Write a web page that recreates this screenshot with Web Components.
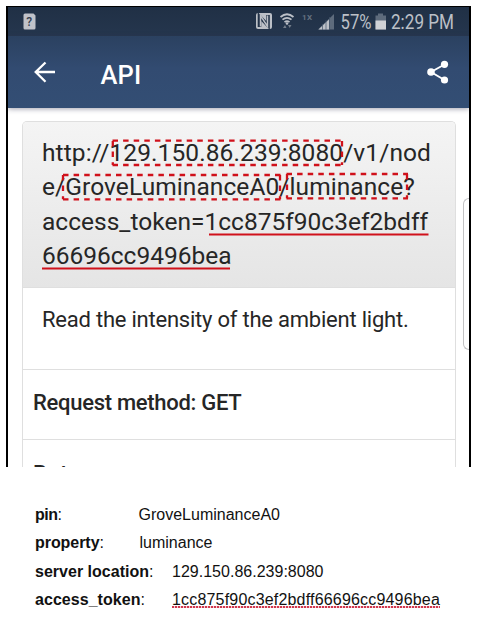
<!DOCTYPE html>
<html lang="en">
<head>
<meta charset="utf-8">
<title>API</title>
<style>
body { margin: 0; background: #fff; font-family: Roboto, sans-serif; color: #262626; }
</style>
</head>
<body>
<api-page></api-page>

<template id="t-page">
<style>
:host { display: block; width: 480px; height: 621px; overflow: hidden; }
</style>
<phone-shot></phone-shot>
<legend-list></legend-list>
</template>

<template id="t-phone">
<style>
:host { display: block; position: relative; box-sizing: border-box; width: 465px; height: 461px; margin: 6px 0 0 6px; overflow: hidden; border: solid #000; border-width: 1px 2px 0 2px; background: #fff; }
.edge { position: absolute; right: 0; top: 191px; width: 5px; height: 150px; border: 1px solid #c2c2c4; border-right: 0; border-radius: 7px 0 0 7px; }
</style>
<status-bar></status-bar>
<app-bar></app-bar>
<api-card></api-card>
<div class="edge"></div>
</template>

<template id="t-status">
<style>
:host { display: block; height: 29px; background: linear-gradient(#203045, #25364e); color: #bcc0c7; }
svg { display: block; }
text { font: 20px Roboto, sans-serif; fill: currentColor; }
</style>
<svg width="461" height="29" viewBox="8 7 461 29">
<path d="M25 13.5h8.5l2 2V28a1.5 1.5 0 0 1-1.500 1.500H25a1.500 1.500 0 0 1-1.500-1.500V15a1.500 1.500 0 0 1 1.500-1.500z" fill="#c0c2c9"/>
<text x="26.300" y="26" style="font-size:12px;font-weight:500;fill:#34404f">?</text>
<rect x="256" y="13" width="16" height="16" rx="2" fill="#bcc0c7"/>
<path d="M259.500 27V16.500L268 25.500V15" fill="none" stroke="#223248" stroke-width="3.600"/>
<path d="M260.500 26.500V15.500L267.500 26.500V15.500" fill="none" stroke="#bcc0c7" stroke-width="1.500"/>
<path d="M280.500 17q6.500-5.500 13 0M282.500 19.700q4.500-3.800 9 0M284.500 22.200q2.500-2 5 0" fill="none" stroke="#bcc0c7" stroke-width="1.700"/>
<circle cx="287" cy="23.500" r="1.300" fill="#bcc0c7"/>
<path d="M283 28l2-3 1.500 3zM288 25h3.500l-1.800 3z" fill="#747e8b"/>
<text x="302" y="20" textLength="10" style="font-size:8px;font-weight:700;fill:#667180">1X</text>
<path d="M334 14v15.500h-16z" fill="#5e6b7c"/>
<path d="M318.500 29.500l10.500-10v10z" fill="#bcc0c7"/>
<path d="M322.500 24v6M326 20v10M329.500 17v13" stroke="#44546a" stroke-width=".7"/>
<text x="340.500" y="28.800" textLength="31" lengthAdjust="spacingAndGlyphs">57%</text>
<path d="M378 13.500h5v2h3v14h-10.500v-14h2.500z" fill="#5e6b7c"/>
<path d="M375.500 20.500H386v9h-10.500z" fill="#d0d1d5"/>
<text x="391" y="28.800" textLength="63" lengthAdjust="spacingAndGlyphs">2:29 PM</text>
</svg>
</template>

<template id="t-appbar">
<style>
:host { display: flex; align-items: center; box-sizing: border-box; height: 72px; padding: 0 20px 0 26px; color: #fff; background: linear-gradient(#2b4160, #324b71 45%, #334e74); box-shadow: 0 1px 5px rgba(50,50,80,.45); position: relative; }
h1 { margin: 0 auto 0 44.500px; font-size: 25.500px; font-weight: 500; line-height: 30px; padding-top: 6px; }
svg { display: block; }
</style>
<svg width="22" height="22" viewBox="34 61 22 22" fill="none" stroke="#fff" stroke-width="2.300"><path d="M55 72H35.700M45.500 62.500L35.700 72l9.800 9.800"/></svg>
<h1><fit-text width="41">API</fit-text></h1>
<svg width="22" height="24" viewBox="427 60.500 22 24" fill="#fff"><path d="M444.500 65L431 72.500l13.500 8" fill="none" stroke="#fff" stroke-width="1.900"/><circle cx="444.500" cy="64.800" r="3.600"/><circle cx="431" cy="72.500" r="3.800"/><circle cx="444.500" cy="80.500" r="3.600"/></svg>
</template>

<template id="t-card">
<style>
:host { display: block; width: 434px; height: 360px; margin: 13px 0 0 13.500px; box-sizing: border-box; border: 1px solid #dfdfdf; border-bottom: 0; border-radius: 5px 5px 0 0; overflow: hidden; position: relative; }
.url { height: 165px; box-sizing: border-box; padding: 13.500px 0 0 19.500px; background: linear-gradient(#f4f4f4, #e5e5e5); font-size: 24.500px; line-height: 34.500px; color: #262626; }
.row { box-sizing: border-box; border-top: 1px solid #dfdfdf; font-size: 22px; line-height: 26px; }
.desc { height: 82px; padding: 19px 0 0 19.500px; }
.method { height: 70px; padding: 20px 0 0 10.500px; font-weight: 500; }
.next { height: 70px; padding: 21px 0 0 10.500px; font-weight: 500; }
</style>
<div class="url">
<fit-text width="389">http://129.150.86.239:8080/v1/nod</fit-text>
<fit-text width="373">e/GroveLuminanceA0/luminance?</fit-text>
<fit-text width="386">access_token=1cc875f90c3ef2bdff</fit-text>
<fit-text width="189.500">66696cc9496bea</fit-text>
</div>
<div class="row desc"><fit-text width="366.500">Read the intensity of the ambient light.</fit-text></div>
<div class="row method"><fit-text width="208.500">Request method: GET</fit-text></div>
<div class="row next"><fit-text width="70">Return</fit-text></div>
<mark-layer></mark-layer>
</template>

<template id="t-marks">
<style>
:host { position: absolute; left: -.500px; top: 0; width: 432px; height: 165px; pointer-events: none; }
svg { display: block; }
</style>
<svg width="432" height="165" viewBox="22 122 432 165" fill="none" stroke="#d0111b" stroke-width="2.300">
<g stroke-dasharray="5.500 5.100">
<path d="M112.500 140.700H343M112.500 165H343M112.800 141V165M342 141V165"/>
<path d="M63 175H281M63 199.300H281M63 175V199.300M280 175V199.300"/>
<path d="M286.500 174H408M286.500 198.300H408M287 174V198.300M407 174V198.300"/>
</g>
<path d="M209 234.500H428.500M42 268.500H230" stroke-width="1.800"/>
</svg>
</template>

<template id="t-legend">
<style>
:host { display: grid; grid-auto-rows: 28.400px; margin: 34px 0 0 35px; font: 16px/28px "Liberation Sans", Arial, sans-serif; color: #111; }
</style>
<legend-item label="pin" lw="22.500" gap="77" vw="141.500">GroveLuminanceA0</legend-item>
<legend-item label="property" lw="64.500" gap="36" vw="73">luminance</legend-item>
<legend-item label="server location" lw="114" gap="19" vw="151.500">129.150.86.239:8080</legend-item>
<legend-item label="access_token" lw="105.500" gap="27.500" vw="268" spell>1cc875f90c3ef2bdff66696cc9496bea</legend-item>
</template>

<template id="t-item">
<style>
:host { display: flex; white-space: nowrap; }
b { font-weight: 700; }
.colon { width: 4px; }
.value { position: relative; }
:host([spell]) .value::after { content: ""; position: absolute; left: 0; right: 0; top: 20px; height: 2px; background: repeating-linear-gradient(90deg, #d0384e 0 2px, #f6d0d6 2px 3px); }
</style>
<b></b><span class="colon">:</span><span class="value"></span>
</template>

<script>
const stamp = (host, id) => {
  const root = host.attachShadow({ mode: "open" });
  root.append(document.getElementById(id).content.cloneNode(true));
  return root;
};
const simple = (tag, id) => customElements.define(tag, class extends HTMLElement {
  constructor() { super(); stamp(this, id); }
});

// Single line of text whose letter spacing is set so that it spans `width` pixels.
customElements.define("fit-text", class extends HTMLElement {
  constructor() {
    super();
    this.attachShadow({ mode: "open" }).innerHTML =
      "<style>:host{display:block;white-space:nowrap}span{display:inline-block}</style><span><slot></slot></span>";
  }
  connectedCallback() {
    const span = this.shadowRoot.querySelector("span");
    const w = Number(this.getAttribute("width"));
    const natural = span.getBoundingClientRect().width;
    const count = this.textContent.length;
    if (natural && w) span.style.letterSpacing = (w - natural) / count + "px";
    this.style.width = w + "px";
  }
});

customElements.define("legend-item", class extends HTMLElement {
  constructor() { super(); this.root = stamp(this, "t-item"); }
  connectedCallback() {
    const run = (width, text) => {
      const el = document.createElement("fit-text");
      el.setAttribute("width", width);
      el.textContent = text;
      return el;
    };
    this.root.querySelector("b").append(run(this.getAttribute("lw"), this.getAttribute("label")));
    const value = this.root.querySelector(".value");
    value.style.marginLeft = this.getAttribute("gap") + "px";
    value.append(run(this.getAttribute("vw"), this.textContent));
  }
});

simple("mark-layer", "t-marks");
simple("status-bar", "t-status");
simple("app-bar", "t-appbar");
simple("api-card", "t-card");
simple("phone-shot", "t-phone");
simple("legend-list", "t-legend");
simple("api-page", "t-page");
</script>
</body>
</html>
